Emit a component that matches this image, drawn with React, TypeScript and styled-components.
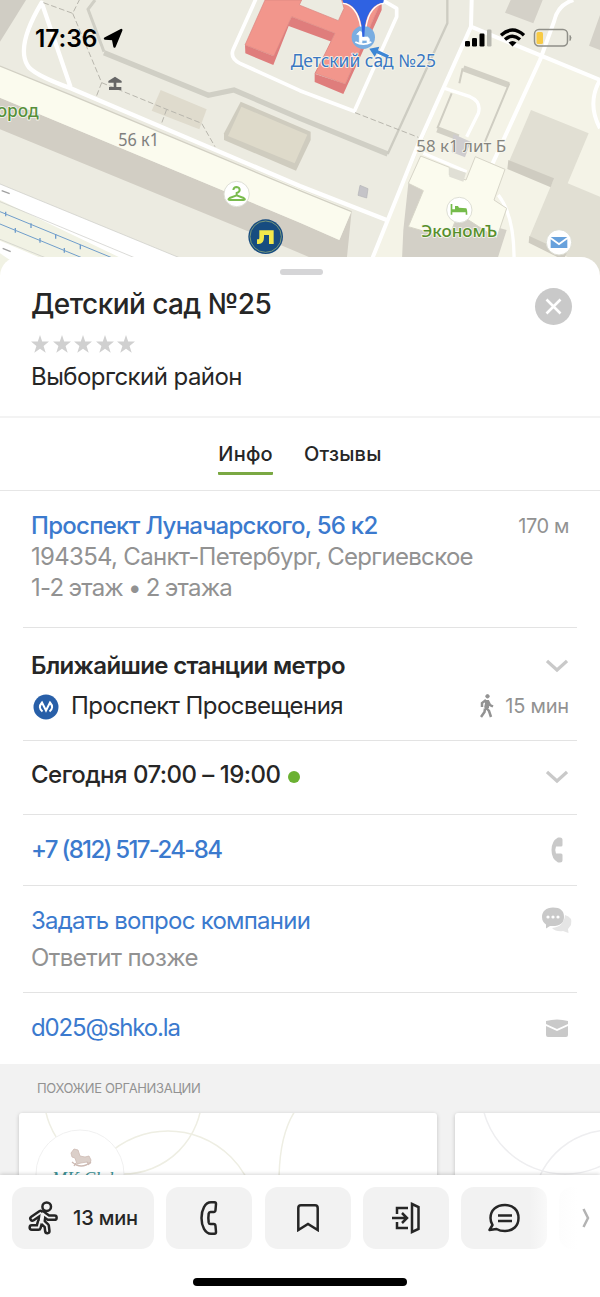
import React from "react";
import styled, { createGlobalStyle } from "styled-components";

const Global = createGlobalStyle`
  * { box-sizing: border-box; }
  body { margin: 0; background: #fff; font-family: Inter, "Liberation Sans", sans-serif; color: #262626; }
`;

const Screen = styled.main`
  width: 600px;
  height: 1297px;
  overflow: hidden;
  display: flex;
  flex-direction: column;
  background: #fff;
`;

const MapArea = styled.section`
  position: relative;
  height: 280px;
  flex: none;
  margin-bottom: -23px;
  & > svg { display: block; }
`;

const StatusBar = styled.div`
  position: absolute;
  inset: 0 0 auto 0;
  height: 76px;
  padding: 0 28px 0 35px;
  display: flex;
  align-items: center;
  color: #000;
`;

const Clock = styled.span`
  font-size: 24.5px;
  font-weight: 600;
  width: 68px;
  white-space: nowrap;
  letter-spacing: -0.1px;
`;

const StatusIcons = styled.div`
  margin-left: auto;
  display: flex;
  align-items: center;
`;

const Sheet = styled.section`
  position: relative;
  flex: none;
  height: 918px;
  background: #fff;
  border-radius: 19px 19px 0 0;
  overflow: hidden;
  display: flex;
  flex-direction: column;
`;

const Handle = styled.div`
  width: 43px;
  height: 6px;
  border-radius: 3px;
  background: #d5d5d7;
  margin: 12px 0 0 280px;
  flex: none;
`;

const Header = styled.header`
  height: 143px;
  flex: none;
  padding: 11px 28px 0 31px;
  border-bottom: 2px solid #f3f3f3;
  display: flex;
  justify-content: space-between;
`;

const Title = styled.h1`
  margin: 0;
  font-size: 28px;
  line-height: 36px;
  font-weight: 500;
  letter-spacing: -0.56px;
  white-space: nowrap;
`;

const Stars = styled.div`
  display: flex;
  gap: 3.5px;
  margin: 13px 0 1px;
  height: 18px;
`;

const CloseButton = styled.button`
  width: 37px;
  height: 37px;
  margin-top: 2px;
  border: 0;
  padding: 0;
  border-radius: 50%;
  background: #c9c9c9;
  display: grid;
  place-items: center;
`;

const Tabs = styled.nav`
  height: 73px;
  flex: none;
  display: flex;
  justify-content: center;
  gap: 31px;
  padding-top: 21px;
  border-bottom: 1px solid #e6e6e6;
`;

const Tab = styled.span<{ $active?: boolean }>`
  height: 36px;
  font-size: 20px;
  line-height: 30px;
  font-weight: 500;
  letter-spacing: 0.22px;
  border-bottom: 3px solid ${(p) => (p.$active ? "#7aa843" : "transparent")};
  border-radius: 1px;
`;

const Section = styled.section<{ $h: number; $pad: number; $last?: boolean }>`
  height: ${(p) => p.$h}px;
  flex: none;
  margin: 0 23px;
  padding: ${(p) => p.$pad}px 8px 0;
  border-bottom: ${(p) => (p.$last ? "0" : "1px solid #e3e3e3")};
`;

const Row = styled.div<{ $h: number }>`
  display: flex;
  align-items: center;
  justify-content: space-between;
  height: ${(p) => p.$h}px;
`;

const Text = styled.span<{ $tone?: "link" | "muted"; $weight?: number; $size?: number; $track?: number; $word?: number }>`
  font-size: ${(p) => p.$size ?? 24}px;
  font-weight: ${(p) => p.$weight ?? 400};
  letter-spacing: ${(p) => p.$track ?? 0}px;
  word-spacing: ${(p) => p.$word ?? 0}px;
  color: ${(p) => (p.$tone === "link" ? "#3b7ace" : p.$tone === "muted" ? "#929292" : "#262626")};
  line-height: 30px;
  white-space: nowrap;
`;

const Group = styled.div<{ $gap: number }>`
  display: flex;
  align-items: center;
  gap: ${(p) => p.$gap}px;
`;

const OpenDot = styled.i`
  width: 12px;
  height: 12px;
  border-radius: 50%;
  background: #6bb132;
  margin-top: 3px;
`;

const IconSlot = styled.span<{ $drop?: number }>`
  width: 32px;
  margin-right: -4px;
  padding-top: ${(p) => p.$drop ?? 0}px;
  display: flex;
  justify-content: center;
`;

const Similar = styled.section`
  flex: none;
  height: 111px;
  background: #f2f2f2;
  overflow: hidden;
`;

const SimilarTitle = styled.h2`
  margin: 0;
  padding: 14px 0 0 37px;
  height: 49px;
  font-size: 13px;
  line-height: 20px;
  font-weight: 400;
  letter-spacing: -0.33px;
  color: #929292;
`;

const Cards = styled.div`
  display: flex;
  gap: 18px;
  padding-left: 19px;
`;

const Card = styled.article`
  width: 418px;
  height: 120px;
  flex: none;
  border-radius: 3px;
  background: #fff;
  box-shadow: 0 1px 4px rgba(0, 0, 0, 0.2);
  overflow: hidden;
`;

const Bottom = styled.footer`
  position: relative;
  flex: none;
  height: 122px;
  background: #fff;
  box-shadow: 0 -1px 4px rgba(0, 0, 0, 0.16);
  padding: 12px 0 0 12px;
  display: flex;
  flex-direction: column;
`;

const Actions = styled.div`
  display: flex;
  gap: 12.3px;
  height: 62px;
  overflow: hidden;
`;

const Action = styled.button<{ $w?: number; $fade?: boolean; $ghost?: boolean }>`
  width: ${(p) => p.$w ?? 86}px;
  height: 62px;
  flex: none;
  border: 0;
  padding: 0;
  border-radius: 13px;
  background: ${(p) =>
    p.$ghost ? "linear-gradient(90deg, #fdfdfd, #fff 34%)" : p.$fade ? "linear-gradient(90deg, #f2f2f2 80%, #f9f9f9)" : "#f2f2f2"};
  color: #262626;
  display: flex;
  align-items: center;
  justify-content: center;
  gap: 14px;
  font: 500 20px Inter, sans-serif;
  letter-spacing: -0.15px;
  white-space: nowrap;
`;

const HomeBar = styled.div`
  width: 214px;
  height: 8px;
  border-radius: 4px;
  background: #000;
  margin: 29px 0 0 181px;
`;

type LabelProps = { x: number; y: number; w: number; fill: string; size?: number; weight?: number; children: React.ReactNode };

const Label = ({ x, y, w, fill, size = 54, children, weight = 400 }: LabelProps) => (
  <text
    x={x}
    y={y}
    textLength={w}
    lengthAdjust="spacingAndGlyphs"
    fontFamily="'Noto Sans', sans-serif"
    fontSize={size}
    fontWeight={weight}
    fill={fill}
    stroke="#f8f7ee"
    strokeWidth="5"
    strokeLinejoin="round"
    paintOrder="stroke"
  >
    {children}
  </text>
);

const CityMap = () => (
  <svg width="600" height="280" viewBox="0 0 1800 840">
    <rect width="1800" height="840" fill="#ecebe1" />
    <path d="M0 0H78L0 125Z" fill="#d0cdc4" />
    <path d="M1413 80L1800 240V840H1090Z" fill="#f4f3e7" />
    <path d="M1532 0L1515 38 1600 70 1628 0ZM1800 45L1767 137 1800 150Z" fill="#d4d1c8" />

    <path d="M0 552L640 815V840H0Z" fill="#f1f2e4" />
    <path d="M0 552L640 815 500 840 0 600ZM0 722L160 790 60 800 0 760Z" fill="#fff" />
    <path d="M0 552L640 815M0 605L480 805M0 718L190 795" stroke="#c8c9c4" strokeWidth="2" fill="none" />
    <path d="M0 635L430 812M0 672L340 812" stroke="#6f9dcb" strokeWidth="3" fill="none" />
    <path d="M17 635v14M93 670v14M167 702v14M241 734v14M46 684v14M120 714v14M193 744v14" stroke="#6f9dcb" strokeWidth="4" />
    <path d="M5 572l24 9M8 745l24 10" stroke="#a0a0a0" strokeWidth="4" />

    <path d="M0 293L900 668 1018 720 1055 632 1040 780 960 785 740 692 0 388Z" fill="#d2cec4" />
    <path d="M0 198L900 568 1055 632 1018 720 900 668 0 293Z" fill="#fbfbee" />
    <path d="M0 198L210 284 900 572 1055 635" fill="none" stroke="#d2d0c4" strokeWidth="4" />

    <path d="M285 0L264 28 312 155" fill="none" stroke="#d0cfc5" strokeWidth="9" />
    <path d="M312 158L625 286 702 270 900 355 1163 462" fill="none" stroke="#d0cfc5" strokeWidth="16" />
    <path d="M1163 462L1342 70V0" fill="none" stroke="#cdccc2" strokeWidth="7" />

    <path d="M482 270L620 328 598 388 455 332Z" fill="#dfdbcd" />
    <path d="M722 305L932 395V420L888 512 672 420V400Z" fill="#cfccbf" />
    <path d="M724 320L922 404 884 490 684 408Z" fill="#dedaca" />

    <g fill="none" stroke="#fff" strokeLinejoin="round">
      <path d="M212 262L125 8C100 50 50 140 82 195Q95 222 212 265L900 558 1160 660" strokeWidth="13" />
      <path d="M768 -4L699 150Q690 175 720 190L900 272 1063 334 1190 50V25L1140 -4" strokeWidth="11" />
      <path d="M1415 0L1413 80 1256 430 1115 780M1413 80L1800 240M1720 0Q1672 15 1662 65L1620 180 1478 490M1800 240Q1760 310 1800 385" strokeWidth="12" />
      <path d="M1335 265L1410 290Q1445 305 1435 340L1400 410M1270 460L1400 515M1495 585Q1545 650 1542 790" strokeWidth="10" />
    </g>
    <path d="M1378 250L1388 205" stroke="#cfcdc2" strokeWidth="6" />
    <path d="M1390 205L1526 255M1312 388L1375 412" stroke="#d2d0c5" strokeWidth="18" fill="none" />
    <path d="M1528 250L1455 425M1355 280L1312 385" stroke="#cfcdc2" strokeWidth="6" fill="none" />

    <path d="M1593 330L1766 400 1703 550 1800 590V840L1740 790 1588 712 1660 540 1525 490Z" fill="#e1dfd3" />
    <path d="M1525 480L1662 535 1652 562 1522 507ZM1588 708L1700 760 1690 780 1586 728Z" fill="#cfccc1" />

    <path d="M1225 550L1270 572 1225 680 1340 710 1375 650 1520 690 1485 800H1205L1210 690Z" fill="#d3d0c7" />
    <path d="M1262 468L1348 502V525L1398 540 1426 470 1515 508 1482 600 1520 625 1490 715 1375 640 1345 715 1225 680 1270 572 1225 550Z" fill="#fbfbee" stroke="#d7d5c8" strokeWidth="3" />
    <path d="M1348 502V530L1390 545 1398 518Z" fill="#e0dfd5" />
    <path d="M1360 402L1412 425 1395 472 1355 456Z" fill="#cfcdcf" />
    <path d="M1080 556l24 10-4 28-26-8Z" fill="#c5c4c8" stroke="#b4b3b6" strokeWidth="2" />

    <g fill="none" stroke="#b8b6ad" strokeWidth="3" strokeDasharray="17 8">
      <path d="M130 8L218 40 238 0M218 40L305 248 288 292M305 248L500 328 605 370 645 440M500 328L483 375M1065 338L1255 412" />
    </g>

    <path d="M735 135L820 168 875 50 1005 100 946 222 1036 252 1145 0V30L1030 282 944 246V220L995 125 866 78 820 195 736 160Z" fill="#df7d7c" />
    <path d="M795 0L735 135 822 168 875 50 1005 100 946 220 1036 252 1145 0H1025L1032 25 1015 62 898 15 905 0Z" fill="#f2968c" stroke="#da8580" strokeWidth="2" />
    <circle cx="1090" cy="112" r="35" fill="#79ade1" />
    <Label x={872} y={200} w={436} fill="#3a78c2" size={53}>Детский сад №25</Label>
    <path d="M1070 103L1080 93 1087 98V111H1103L1108 116V128H1101V121H1086V128H1078V105Z" fill="#fff" stroke="#fff" strokeWidth="2" />
    <path d="M1066 126Q1090 139 1114 126" fill="none" stroke="#fff" strokeWidth="5" />
    <path d="M1026 -4L1030 8C1056 10 1078 34 1085 78L1087 110H1093L1095 78C1102 34 1124 10 1150 8L1152 -4Z" fill="#2f62e2" />
    <path d="M1028 10C1054 12 1075 36 1082 80M1152 10C1126 12 1105 36 1098 80" fill="none" stroke="#fff" strokeWidth="4" />
    <path d="M1124 150L1166 169" stroke="#fff" strokeWidth="10" />
    <path d="M1108 146L1138 140 1134 151 1167 166 1163 175 1130 160 1124 170Z" fill="#3d87d5" />

    <Label x={-10} y={350} w={126} fill="#56903b" size={53} weight={500}>ород</Label>
    <Label x={355} y={438} w={122} fill="#7f7f7c" size={52}>56 к1</Label>
    <Label x={1249} y={456} w={269} fill="#85857f" size={51}>58 к1 лит Б</Label>
    <Label x={1264} y={712} w={228} fill="#568f2c" size={51} weight={500}>ЭкономЪ</Label>

    <path d="M325 243L345 230 365 243V248H325ZM341 246h8v15h15v9H327v-9h14Z" fill="#666" />
    <circle cx="710" cy="582" r="38" fill="#fff" stroke="#dedfd5" strokeWidth="3" />
    <path d="M700 570q1-9 10-9 9 1 9 9 0 6-9 9v7l21 8q8 5-1 6H690q-9-1-1-6l21-8" fill="none" stroke="#7abb4e" strokeWidth="6" />
    <circle cx="797" cy="710" r="52" fill="#174c80" />
    <circle cx="797" cy="710" r="47" fill="none" stroke="#a9bd78" strokeWidth="2" />
    <path d="M771 725H776Q785 725 785 712V698H814V732" fill="none" stroke="#f3e84b" strokeWidth="14" />
    <circle cx="1378" cy="630" r="38" fill="#fff" stroke="#dedfd5" strokeWidth="3" />
    <path d="M1352 612h5v16h8v-10h9l3 5 22 2q3 4 3 19h-5v-7h-40v7h-5Z" fill="#75bb4b" />
    <circle cx="1677" cy="727" r="38" fill="#fff" stroke="#dedfd5" strokeWidth="3" />
    <path d="M1652 711H1702L1677 729ZM1652 718L1677 736 1702 718V744H1652Z" fill="#67a1dc" />
  </svg>
);

const Chevron = () => (
  <svg width="22" height="14" viewBox="0 0 22 14" fill="none" stroke="#c9c9c9" strokeWidth="3.2">
    <path d="M1 2L11 11 21 2" />
  </svg>
);

const Star = () => (
  <svg width="18" height="18" viewBox="0 0 18 18" fill="#d0d0d0">
    <path d="M9 0L11.200 6.500H18L12.600 10.900 14.700 17.800 9 13.800 3.300 17.800 5.400 10.900 0 6.500H6.800Z" />
  </svg>
);

const runner = "M12.5 12L4.500 17.500M16 13.500L20.500 16.700H26.500M14.500 21L18.700 25 19.300 30M12 21L10.500 26.500H3.800";

const RunnerIcon = () => (
  <svg width="31" height="35" viewBox="0 0 31 35" fill="none" strokeLinejoin="round" strokeLinecap="round">
    <path d={runner} stroke="#262626" strokeWidth="6.800" />
    <path d="M14.500 13.500L13.500 20.500" stroke="#262626" strokeWidth="8.500" />
    <path d={runner} stroke="#f2f2f2" strokeWidth="1.800" />
    <path d="M14.500 13.500L13.500 20.500" stroke="#f2f2f2" strokeWidth="3.800" />
    <circle cx="18.700" cy="5.700" r="4.300" stroke="#262626" strokeWidth="2.500" fill="#f2f2f2" />
  </svg>
);

const Rings = ({ color, first }: { color: string; first?: boolean }) => (
  <svg width="418" height="120" viewBox="0 0 418 120" fill="none" stroke={color} strokeWidth="1.5">
    {first ? (
      <>
        <circle cx="104" cy="-18" r="79" />
        <circle cx="149" cy="107" r="89" />
        <path d="M276 -2Q252 35 264 120" />
        <circle cx="61" cy="61" r="44" fill="#fff" stroke="#f0f0f0" strokeWidth="1" />
        <g fill="#dbcfc9" stroke="#cdbab3" strokeWidth="0.8">
          <path d="M52 40l3-4 4 1 2 6 5 1 4-1 2 4-1 4-3-2-6 1-4 1-2-6-3-1Z" />
          <path d="M53 49q9 8 19 0M57 50l-2 3M68 49l2 3" fill="none" strokeWidth="1.3" />
        </g>
        <text x="33" y="73" fontFamily="Liberation Serif, serif" fontStyle="italic" fontSize="22" textLength="66" lengthAdjust="spacingAndGlyphs" fill="#3e9295" stroke="none">
          MK Club
        </text>
      </>
    ) : (
      <>
        <circle cx="110" cy="-23" r="84" />
        <circle cx="156" cy="95" r="78" />
      </>
    )}
  </svg>
);

export default function App() {
  return (
    <>
      <Global />
      <Screen>
        <MapArea>
          <CityMap />
          <StatusBar>
            <Clock>17:36</Clock>
            <svg width="20" height="20" viewBox="0 0 20 20">
              <path d="M18.300 2L2 10.500 10 11 11.500 18.500Z" stroke="#000" strokeWidth="2.400" strokeLinejoin="round" />
            </svg>
            <StatusIcons>
              <svg width="107" height="20" viewBox="0 0 107 20">
                <rect x="0" y="13" width="5" height="5.5" rx="1.2" />
                <rect x="7" y="10" width="5" height="8.5" rx="1.2" />
                <rect x="14.5" y="5.5" width="5" height="13" rx="1.2" />
                <rect x="22" y="1.5" width="4.5" height="17" rx="1.2" fill="#b8b8b0" />
                <path d="M36 7.2Q47.500 -3 59 7.200M40 11.500Q47.500 5 55 11.500" fill="none" stroke="#000" strokeWidth="3.400" />
                <path d="M43.500 14.600Q47.500 11.500 51.500 14.600L47.500 18.500Z" />
                <rect x="69.500" y="1.500" width="33" height="16.500" rx="4.500" fill="none" stroke="#8f8f88" strokeWidth="1.500" />
                <rect x="71.500" y="4" width="6.500" height="12" rx="1.500" fill="#f7ca45" />
                <path d="M105 7.500q2 2 0 5Z" fill="#8f8f88" stroke="#8f8f88" />
              </svg>
            </StatusIcons>
          </StatusBar>
        </MapArea>

        <Sheet>
          <Handle />
          <Header>
            <div>
              <Title>Детский сад №25</Title>
              <Stars>{[0, 1, 2, 3, 4].map((n) => <Star key={n} />)}</Stars>
              <Row $h={46}><Text $track={-0.55}>Выборгский район</Text></Row>
            </div>
            <CloseButton aria-label="Закрыть">
              <svg width="17" height="17" viewBox="0 0 17 17" stroke="#fff" strokeWidth="2.6">
                <path d="M1.500 1.500L15.500 15.500M15.500 1.500L1.500 15.500" />
              </svg>
            </CloseButton>
          </Header>

          <Tabs>
            <Tab $active>Инфо</Tab>
            <Tab>Отзывы</Tab>
          </Tabs>

          <Section $h={137} $pad={19}>
            <Row $h={31}>
              <Text $tone="link" $weight={500} $track={-0.73}>Проспект Луначарского, 56 к2</Text>
              <Text $tone="muted" $size={20} $track={-0.4}>170 м</Text>
            </Row>
            <Row $h={31}><Text $tone="muted" $track={-0.7}>194354, Санкт-Петербург, Сергиевское</Text></Row>
            <Row $h={31}><Text $tone="muted" $track={-0.75} $word={-1}>1-2 этаж • 2 этажа</Text></Row>
          </Section>

          <Section $h={113} $pad={18}>
            <Row $h={40}>
              <Text $weight={600} $track={-0.63}>Ближайшие станции метро</Text>
              <IconSlot><Chevron /></IconSlot>
            </Row>
            <Row $h={40}>
              <Group $gap={12}>
                <svg width="28" height="28" viewBox="0 0 28 28">
                  <circle cx="15" cy="15" r="12.500" fill="#285fa8" />
                  <path d="M11.500 19.500Q6.500 15.500 11 10.500L15 18.500 19 10.500Q23.500 15.500 18.500 19.500" fill="none" stroke="#fff" strokeWidth="2" />
                </svg>
                <Text $track={-0.57}>Проспект Просвещения</Text>
              </Group>
              <Group $gap={11}>
                <svg width="14" height="24" viewBox="0 0 14 24" fill="none" stroke="#929292" strokeWidth="2.500">
                  <circle cx="7.500" cy="2.300" r="1.700" fill="#929292" strokeWidth="1" />
                  <path d="M7 6L5.500 13 9 17 11 23M5 14.500L4.500 18 1 23M6 6L2 9V13M8 7L10 11 13 12.500" />
                  <path d="M5 6h4v8H5Z" fill="#929292" stroke="none" />
                </svg>
                <Text $tone="muted" $size={20} $track={-0.2}>15 мин</Text>
              </Group>
            </Row>
          </Section>

          <Section $h={74} $pad={14}>
            <Row $h={40}>
              <Group $gap={8}><Text $weight={500} $track={-0.52}>Сегодня 07:00 – 19:00</Text><OpenDot /></Group>
              <IconSlot $drop={4}><Chevron /></IconSlot>
            </Row>
          </Section>

          <Section $h={71} $pad={15}>
            <Row $h={40}>
              <Text $tone="link" $weight={500} $track={-1.68}>+7 (812) 517-24-84</Text>
              <IconSlot>
                <svg width="12" height="26" viewBox="0 0 12 26" fill="#c9c9c9">
                  <path d="M7 0.500H9Q11.500 .5 11.500 3V8Q11.500 9.500 10 9.500H5Q3.500 13 5 16.500H10Q11.500 16.500 11.500 18V23Q11.500 25.500 9 25.500H7Q.5 22 .5 13T7 .5Z" />
                </svg>
              </IconSlot>
            </Row>
          </Section>

          <Section $h={107} $pad={16}>
            <Row $h={37}>
              <Text $tone="link" $track={-0.75}>Задать вопрос компании</Text>
              <IconSlot>
                <svg width="32" height="27" viewBox="0 0 32 27">
                  <path d="M24 8Q32 10 30 18L27 22 27.500 26 22 24Q15 25 11 21 23 20 24 8Z" fill="#e5e5e5" />
                  <path d="M12 .5C5 .5 1 4.500 1 10 1 14 3 16 5 17.500V21.500L9 19Q23 20 23 10 23 .5 12 .5Z" fill="#c9c9c9" />
                  <g fill="#fff"><circle cx="7" cy="10" r="1.600" /><circle cx="12" cy="10" r="1.600" /><circle cx="17" cy="10" r="1.600" /></g>
                </svg>
              </IconSlot>
            </Row>
            <Row $h={37}><Text $tone="muted" $track={-0.57}>Ответит позже</Text></Row>
          </Section>

          <Section $h={71} $pad={15} $last>
            <Row $h={40}>
              <Text $tone="link" $track={-1.12}>d025@shko.la</Text>
              <IconSlot>
                <svg width="22" height="18" viewBox="0 0 22 18" fill="#c9c9c9">
                  <path d="M0 2Q11 -1 22 2V5L11 10 0 5ZM0 7L11 12 22 7V16Q22 18 20 18H2Q0 18 0 16Z" />
                </svg>
              </IconSlot>
            </Row>
          </Section>

          <Similar>
            <SimilarTitle>ПОХОЖИЕ ОРГАНИЗАЦИИ</SimilarTitle>
            <Cards>
              <Card><Rings color="#eeeee3" first /></Card>
              <Card><Rings color="#eeeef0" /></Card>
            </Cards>
          </Similar>
        </Sheet>

        <Bottom>
          <Actions>
            <Action $w={142}>
              <RunnerIcon />
              13 мин
            </Action>
            <Action aria-label="Позвонить">
              <svg width="18" height="34" viewBox="0 0 18 34" fill="none" stroke="#262626" strokeWidth="2.500" strokeLinejoin="round">
                <path d="M11 1.300H14.500Q16 1.300 16 3L15.500 9Q15.300 11 13.800 11H10.500Q9 11 8.700 12.500Q8 17 8.700 21.500Q9 23 10.500 23H13.800Q15.300 23 15.500 25L16 31Q16 32.700 14.500 32.700H11C5 32.700 1.500 25 1.500 17S5 1.300 11 1.300Z" />
              </svg>
            </Action>
            <Action aria-label="Сохранить">
              <svg width="22" height="28" viewBox="0 0 22 28" fill="none" stroke="#262626" strokeWidth="2.500">
                <path d="M1.300 26V4Q1.300 1.300 4 1.300H18Q20.700 1.300 20.700 4V26L11 20Z" />
              </svg>
            </Action>
            <Action aria-label="Вход">
              <svg width="28" height="32" viewBox="0 0 28 32" fill="none" stroke="#262626" strokeWidth="2.500">
                <path d="M16 6H5V12M5 20V26H16M0 16H15M10 11L15 16 10 21M20 2L26.500 5V27L20 30Z" />
              </svg>
            </Action>
            <Action $fade aria-label="Чат">
              <svg width="32" height="30" viewBox="0 0 32 30" fill="none" stroke="#262626" strokeWidth="2.500" strokeLinejoin="round">
                <path d="M17 2C8 2 2.500 7.500 2.500 15Q2.500 19 4.500 22L1.500 27 8.500 26Q12 28 17 28C25 28 30.500 23 30.500 15S25 2 17 2ZM10 12.500H24M10 18H24" />
              </svg>
            </Action>
            <Action $ghost $w={54} aria-label="Ещё">
              <svg width="8" height="20" viewBox="0 0 8 20" fill="none" stroke="#b3b3b3" strokeWidth="2.500">
                <path d="M1.500 1L6 10 1.500 19" />
              </svg>
            </Action>
          </Actions>
          <HomeBar />
        </Bottom>
      </Screen>
    </>
  );
}
